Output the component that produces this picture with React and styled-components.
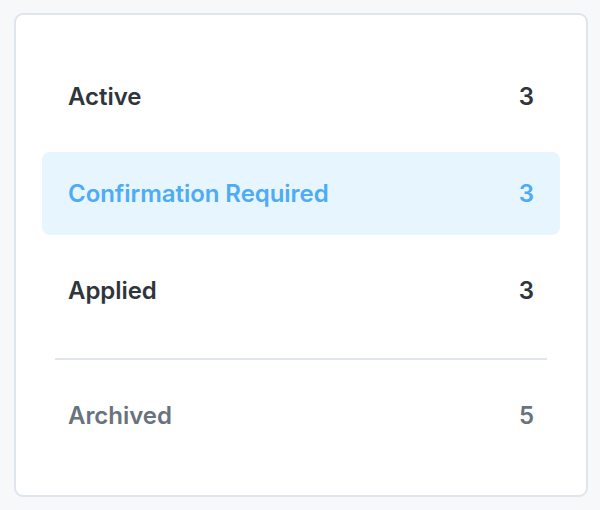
import React from "react";
import styled, { createGlobalStyle } from "styled-components";

const GlobalStyle = createGlobalStyle`
  * {
    box-sizing: border-box;
  }
  body {
    margin: 0;
    background: #f6f8fa;
    font-family: Inter, "Liberation Sans", sans-serif;
  }
`;

const Page = styled.div`
  padding: 13px 13px 13px 14px;
`;

const Card = styled.div`
  width: 574px;
  background: #ffffff;
  border: 2px solid #dfe5ec;
  border-radius: 9px;
  padding: 40px 26px 38px;
`;

const List = styled.div`
  display: flex;
  flex-direction: column;
  gap: 14px;
`;

const Row = styled.div`
  display: flex;
  align-items: center;
  justify-content: space-between;
  height: 83px;
  padding: 0 26px;
  border-radius: 8px;
  font-size: 24px;
  font-weight: 600;
  letter-spacing: -0.05px;
  background: ${(props) => (props.selected ? "#e7f5fe" : "transparent")};
  color: ${(props) =>
    props.selected ? "#4dabf7" : props.muted ? "#68737d" : "#2f353c"};
`;

const Divider = styled.hr`
  border: none;
  border-top: 2px solid #e1e6ec;
  margin: 12px 13px 0;
`;

const items = [
  { label: "Active", count: 3 },
  { label: "Confirmation Required", count: 3, selected: true },
  { label: "Applied", count: 3 },
];

const App = () => (
  <>
    <GlobalStyle />
    <Page>
      <Card>
        <List>
          {items.map((item) => (
            <Row key={item.label} selected={item.selected}>
              <span>{item.label}</span>
              <span>{item.count}</span>
            </Row>
          ))}
          <Divider />
          <Row muted>
            <span>Archived</span>
            <span>5</span>
          </Row>
        </List>
      </Card>
    </Page>
  </>
);

export default App;
